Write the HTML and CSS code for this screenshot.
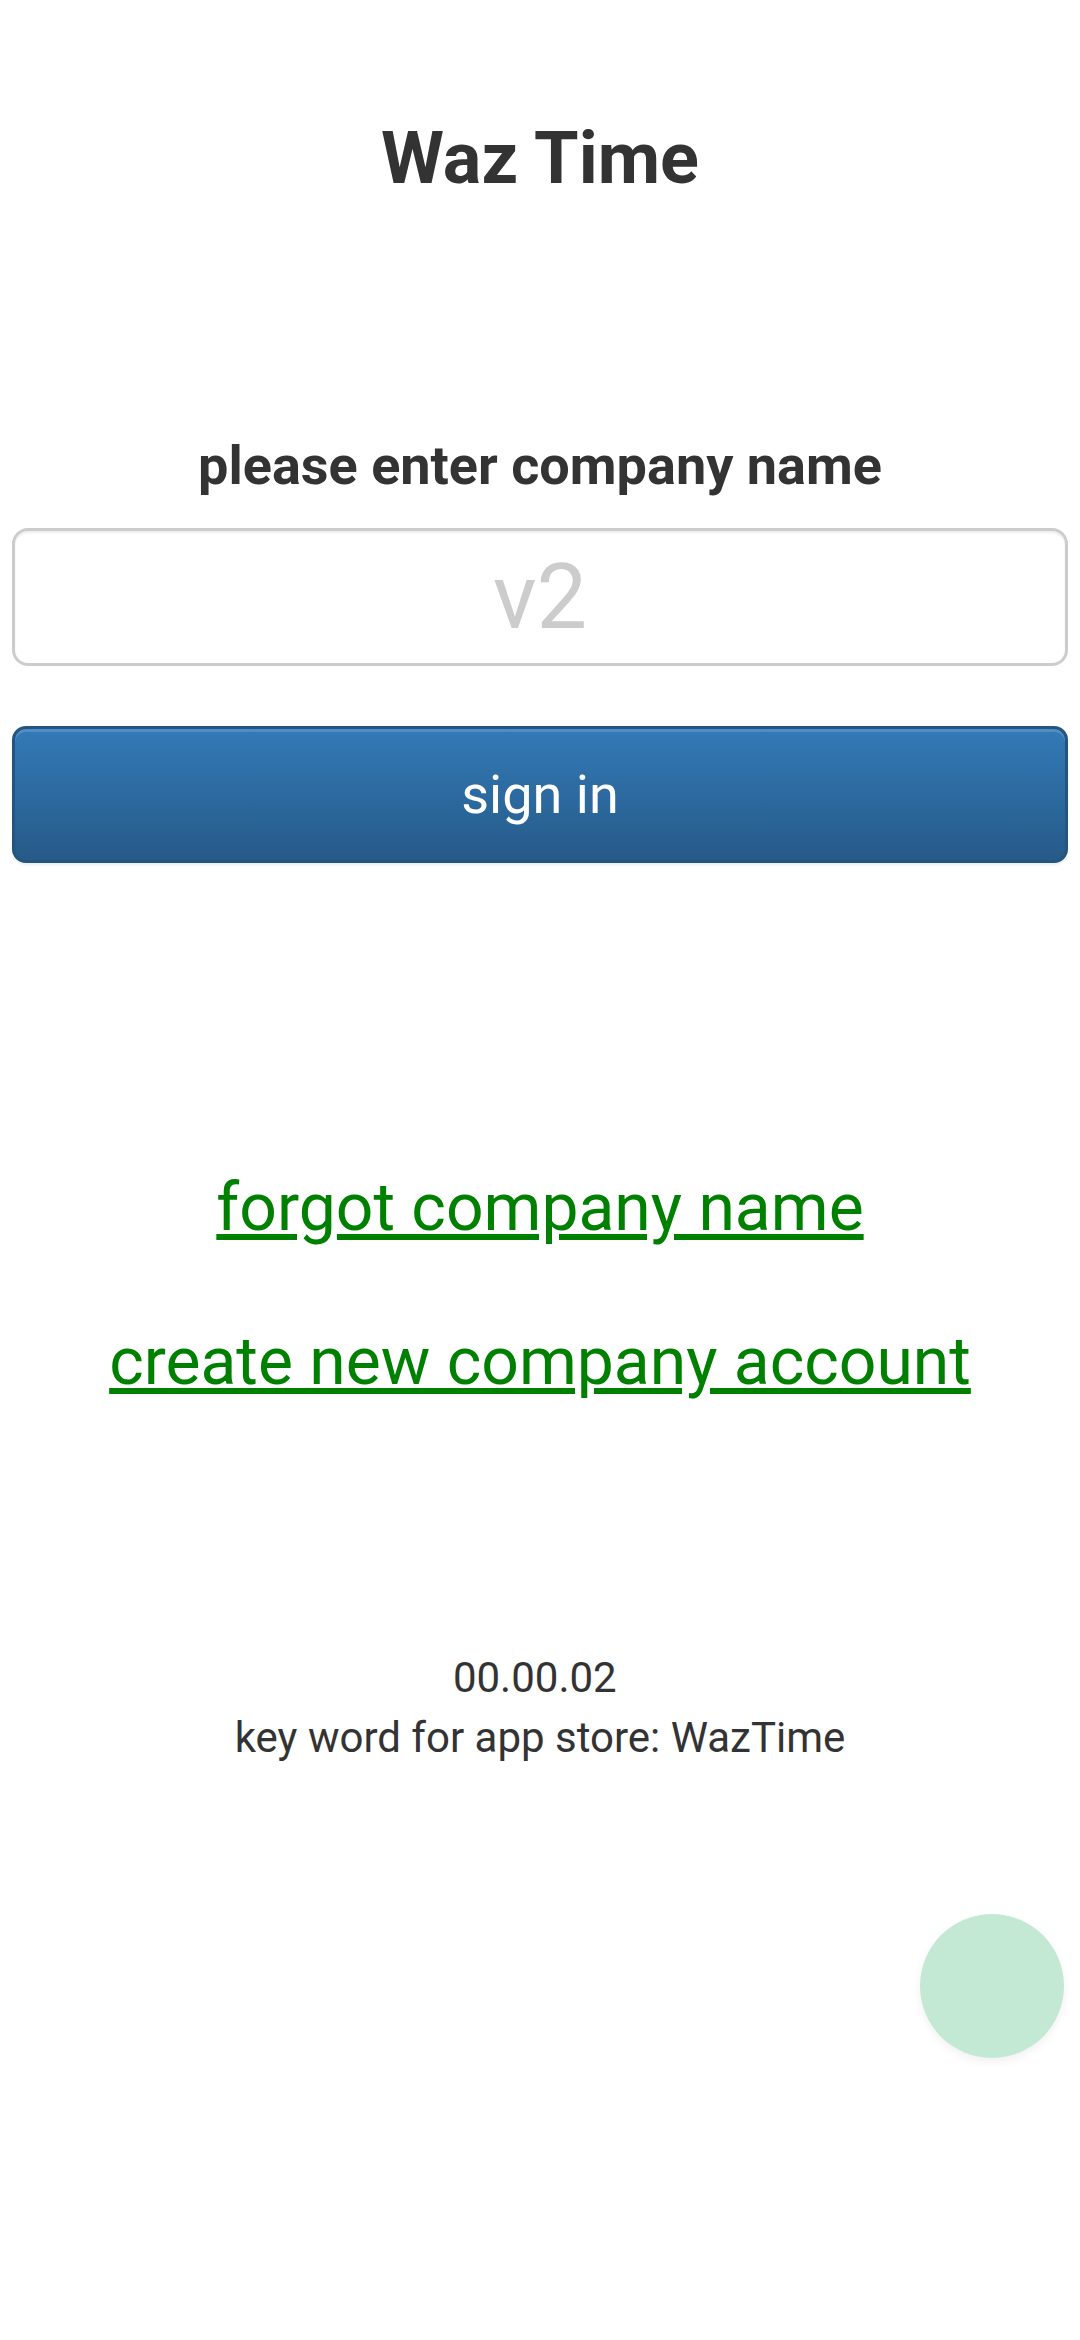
FILE: index.html
```html
<!DOCTYPE html>
<html lang="en">
<head>
    <meta charset="UTF-8">
    <meta name="viewport" content="width=device-width, initial-scale=1.0">
    <title>Waz Time</title>
    <link rel="stylesheet" href="styles.css">
</head>
<body>
    <h1 class="title">Waz Time</h1>
    <form class="login-form" id="loginForm">
        <label for="company" class="field-label">please enter company name</label>
        <input type="text" id="company" class="company-input" placeholder="v2">
        <button type="submit" class="btn-primary">sign in</button>
    </form>
    <div class="links">
        <a href="#" class="link">forgot company name</a>
        <a href="#" class="link">create new company account</a>
    </div>
    <div class="footer">
        <div class="version">00.00.02&nbsp;</div>
        <div class="keyword">key word for app store: WazTime</div>
    </div>
    <div class="fab"></div>
</body>
</html>
```

FILE: styles.css
```css
body {
    font-family: Roboto, "Noto Sans", Arial, sans-serif;
    margin: 0;
    padding: 0 12px;
    background-color: #fff;
    color: #333;
    text-align: center;
}

.title {
    font-size: 72px;
    font-weight: bold;
    line-height: 86px;
    margin: 116px 0 0;
}

.login-form {
    display: flex;
    flex-direction: column;
    margin-top: 232px;
}

.field-label {
    font-size: 54px;
    font-weight: bold;
    line-height: 64px;
    margin-bottom: 30px;
}

.company-input {
    height: 138px;
    border: 3px solid #ccc;
    border-radius: 16px;
    box-shadow: inset 0 2px 2px rgba(0, 0, 0, 0.075);
    box-sizing: border-box;
    font-family: inherit;
    font-size: 90px;
    text-align: center;
    color: #555;
    padding: 0 20px;
    outline: none;
}

.company-input::placeholder {
    color: #ccc;
}

.btn-primary {
    margin-top: 60px;
    height: 137px;
    background-image: linear-gradient(to bottom, #337ab7 0%, #265a88 100%);
    border: 3px solid #245580;
    border-radius: 14px;
    box-shadow: inset 0 3px 0 rgba(255, 255, 255, 0.15), 0 2px 3px rgba(0, 0, 0, 0.075);
    color: #fff;
    font-family: inherit;
    font-size: 54px;
    cursor: pointer;
    padding: 0;
}

.links {
    display: flex;
    flex-direction: column;
    align-items: center;
    gap: 74px;
    margin-top: 305px;
}

.link {
    font-size: 66px;
    line-height: 80px;
    color: #008000;
    text-decoration: underline;
}

.footer {
    margin-top: 246px;
    font-size: 42px;
    line-height: 60px;
}

.fab {
    position: fixed;
    right: 16px;
    bottom: 282px;
    width: 144px;
    height: 144px;
    border-radius: 50%;
    background-color: #c3e9d5;
    box-shadow: 0 4px 10px rgba(0, 0, 0, 0.06);
}
```
